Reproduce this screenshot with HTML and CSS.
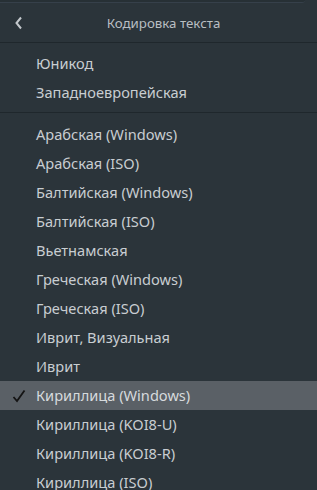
FILE: index.html
```html
<!DOCTYPE html>
<html lang="ru">
<head>
<meta charset="utf-8">
<link rel="stylesheet" href="styles.css">
</head>
<body>
<div class="popover">
  <div class="edge"></div>
  <header class="header">
    <span class="back"><svg width="10" height="14" viewBox="0 0 10 14"><path d="M7 1.5 L2.5 7 L7 12.5" fill="none" stroke="#c3c8cc" stroke-width="2"/></svg></span>
    <span class="title">Кодировка текста</span>
  </header>
  <ul class="section first">
    <li class="row">Юникод</li>
    <li class="row">Западноевропейская</li>
  </ul>
  <ul class="section">
    <li class="row">Арабская (Windows)</li>
    <li class="row">Арабская (ISO)</li>
    <li class="row">Балтийская (Windows)</li>
    <li class="row">Балтийская (ISO)</li>
    <li class="row">Вьетнамская</li>
    <li class="row">Греческая (Windows)</li>
    <li class="row">Греческая (ISO)</li>
    <li class="row">Иврит, Визуальная</li>
    <li class="row">Иврит</li>
    <li class="row selected"><span class="check"><svg width="14" height="14" viewBox="0 0 14 14"><path d="M1.5 8 L5 12 L12.5 1.5" fill="none" stroke="#141414" stroke-width="1.8"/></svg></span>Кириллица (Windows)</li>
    <li class="row">Кириллица (KOI8-U)</li>
    <li class="row">Кириллица (KOI8-R)</li>
    <li class="row">Кириллица (ISO)</li>
  </ul>
</div>
</body>
</html>
```
FILE: styles.css
```css
html, body {
  margin: 0;
  padding: 0;
  background: #2b343a;
}
body {
  width: 317px;
  height: 490px;
  overflow: hidden;
  font-family: "Noto Sans", "Open Sans", sans-serif;
  color: #c8cdd1;
}
.popover {
  display: flex;
  flex-direction: column;
}
.edge {
  height: 2px;
  margin-right: 12px;
  background: #273035;
  border-bottom: 1px solid #36404a;
  border-bottom-right-radius: 4px;
}
.header {
  position: relative;
  height: 39px;
  display: flex;
  align-items: center;
  justify-content: center;
  border-bottom: 1px solid #1f272c;
}
.back {
  position: absolute;
  left: 14px;
  top: 13px;
  display: flex;
}
.title {
  font-size: 13.3px;
  color: #b9bec2;
  margin-left: 10px;
}
.section {
  list-style: none;
  margin: 0;
  padding: 7px 0 6px 0;
}
.section.first {
  border-bottom: 1px solid #1f272c;
  padding: 6px 0 5px 0;
}
.row {
  position: relative;
  height: 29px;
  line-height: 29px;
  padding-left: 36px;
  font-size: 14.6px;
  white-space: nowrap;
}
.row.selected {
  background: #5a6066;
  color: #d6dadd;
}
.check {
  position: absolute;
  left: 12px;
  top: 8px;
  display: flex;
}
```
